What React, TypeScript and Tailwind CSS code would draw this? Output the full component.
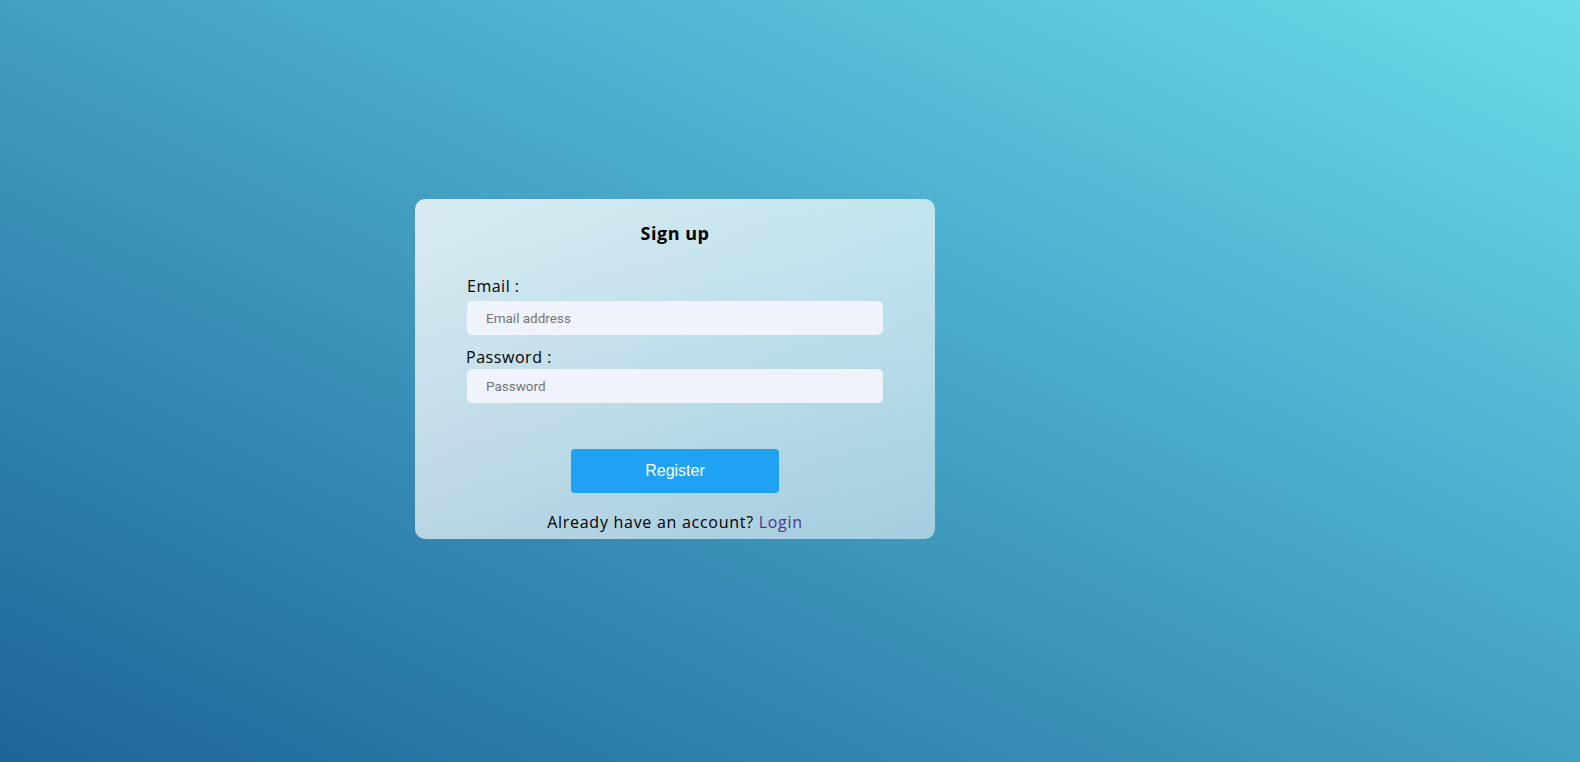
import React from "react";

export default function App() {
  return (
    <div className="w-full h-[762px] overflow-hidden bg-linear-to-tr from-[#1d6598] to-[#6bdcea] pl-[415px] pt-[199px]" style={{ fontFamily: '"Open Sans", sans-serif' }}>
      <div className="w-[520px] h-[340px] rounded-[10px] bg-linear-to-br from-[rgba(255,255,255,0.8)] to-[rgba(255,255,255,0.52)] px-[52px] flex flex-col">
        <h1 className="text-center text-[18px] leading-[27px] font-bold tracking-[0.5px] text-black mt-[21px]">Sign up</h1>
        <label className="mt-[27px] text-[16px] leading-[24px] tracking-[0.5px] text-black">Email :</label>
        <input
          placeholder="Email address"
          className="mt-[3px] h-[34px] w-full rounded-[5px] bg-[#eff3fb] pl-[19px] text-[13.5px] text-[#333] placeholder:text-[#757575] outline-none"
          style={{ fontFamily: 'Roboto, sans-serif' }}
        />
        <label className="mt-[10px] -ml-[1px] text-[16px] leading-[24px] tracking-[0.55px] text-black">Password :</label>
        <input
          type="password"
          placeholder="Password"
          className="mt-[0px] h-[34px] w-full rounded-[5px] bg-[#eff3fb] pl-[19px] text-[13.5px] text-[#333] placeholder:text-[#757575] outline-none"
          style={{ fontFamily: 'Roboto, sans-serif' }}
        />
        <div className="flex justify-center mt-[46px]">
          <button
            className="w-[208px] h-[44px] rounded-[4px] bg-[#1fa2f3] text-white text-[16px]"
            style={{ fontFamily: '"Liberation Sans", Arial, sans-serif' }}
          >
            Register
          </button>
        </div>
        <p className="mt-[17px] text-center text-[16px] leading-[24px] tracking-[0.72px] text-black">
          Already have an account? <a className="text-[#55308f] cursor-pointer">Login</a>
        </p>
      </div>
    </div>
  );
}
